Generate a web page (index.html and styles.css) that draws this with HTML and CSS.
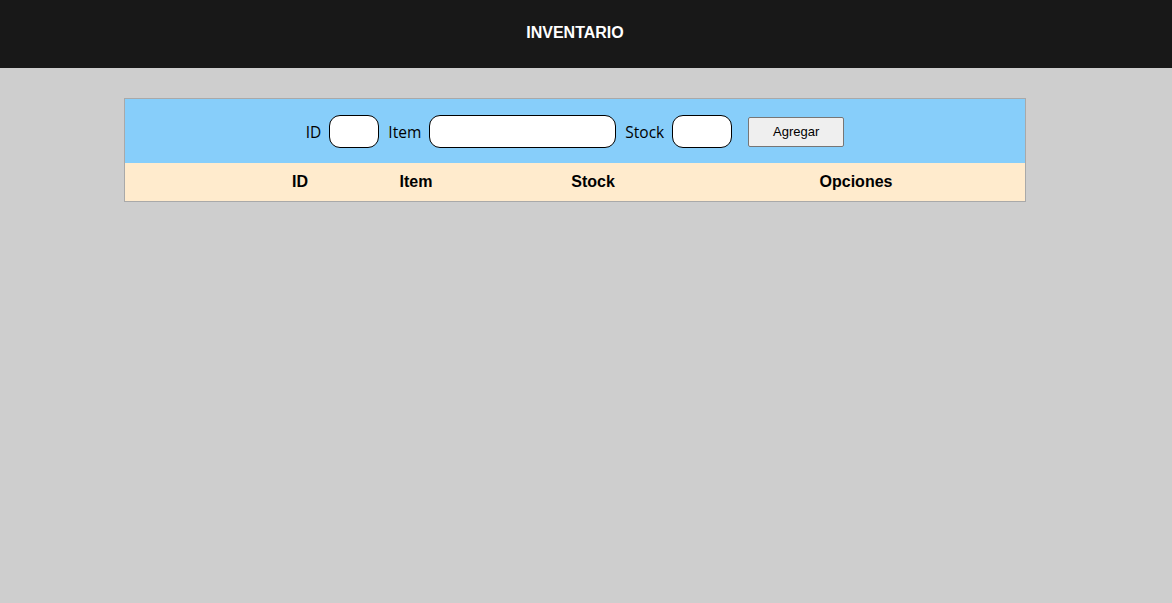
FILE: index.html
```html
<!DOCTYPE html>
<html lang="es">
<head>
<meta charset="utf-8">
<title>Inventario</title>
<link rel="stylesheet" href="styles.css">
</head>
<body>
<header class="topbar">
  <h1 class="title">INVENTARIO</h1>
</header>
<main class="panel">
  <form class="form-row">
    <label class="lbl" for="f-id">ID</label>
    <input class="field field-id" id="f-id" type="text">
    <label class="lbl" for="f-item">Item</label>
    <input class="field field-item" id="f-item" type="text">
    <label class="lbl" for="f-stock">Stock</label>
    <input class="field field-stock" id="f-stock" type="text">
    <button class="btn" type="button">Agregar</button>
  </form>
  <div class="thead">
    <div class="th">ID</div>
    <div class="th">Item</div>
    <div class="th">Stock</div>
    <div class="th">Opciones</div>
  </div>
</main>
</body>
</html>
```
FILE: styles.css
```css
html, body {
  margin: 0;
  padding: 0;
}
body {
  background: #cecece;
  font-family: "Liberation Sans", Arial, sans-serif;
  min-height: 603px;
}
.topbar {
  background: #181818;
  height: 68px;
  display: flex;
  align-items: center;
  justify-content: center;
}
.title {
  margin: 0;
  color: #ffffff;
  font-size: 16px;
  font-weight: bold;
  padding-bottom: 2px;
  padding-right: 22px;
}
.panel {
  width: 900px;
  margin: 30px 0 0 124px;
  border: 1px solid #a9a9a9;
}
.form-row {
  background: #87cefa;
  display: flex;
  align-items: center;
  justify-content: center;
  padding: 16px 0 15px 0;
  margin: 0;
}
.lbl {
  font-family: "Open Sans", "Noto Sans", sans-serif;
  font-size: 15.5px;
  color: #000;
  margin-right: 8px;
}
.field {
  height: 33px;
  box-sizing: border-box;
  border: 1px solid #000;
  border-radius: 11px;
  background: #fff;
  margin: 0 9px 0 0;
  padding: 0 8px;
}
.field-id { width: 50px; }
.field-item { width: 187px; }
.field-stock { width: 60px; margin-right: 16px; }
.btn {
  width: 96px;
  height: 30px;
  box-sizing: border-box;
  background: #efefef;
  border: 1px solid #767676;
  border-radius: 2px;
  font-family: "Liberation Sans", Arial, sans-serif;
  font-size: 13px;
  color: #000;
  padding: 0;
}
.thead {
  background: #ffebcd;
  display: grid;
  grid-template-columns: 116px 116px 238px 288px;
  height: 38px;
  align-items: center;
  padding-left: 117px;
}
.th {
  text-align: center;
  font-weight: bold;
  font-size: 16px;
  color: #000;
}
```
